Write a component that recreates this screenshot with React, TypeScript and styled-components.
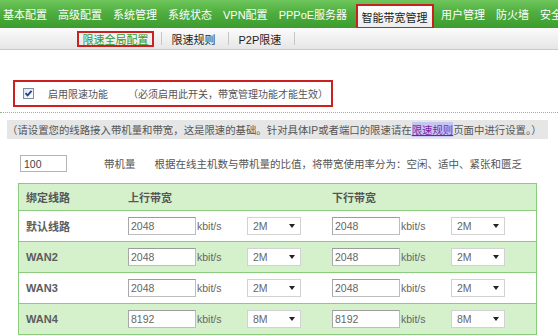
import React from "react";
import styled, { createGlobalStyle } from "styled-components";

const GlobalStyle = createGlobalStyle`
  html, body { margin: 0; padding: 0; background: #fff; }
  body {
    font-family: "Liberation Sans", "Noto Sans CJK SC", sans-serif;
    font-size: 10.5px;
    color: #555;
    overflow: hidden;
  }
  * { box-sizing: border-box; }
`;

const Page = styled.div`
  width: 558px;
  height: 335px;
  overflow: hidden;
  display: flex;
  flex-direction: column;
`;

const TopNav = styled.nav`
  display: flex;
  align-items: stretch;
  height: 28px;
  flex-shrink: 0;
  padding-left: 3px;
  background: linear-gradient(#6fc65c 0%, #4fae3f 45%, #3d9c2e 100%);
  white-space: nowrap;
  overflow: hidden;
  position: relative;
  z-index: 2;
`;

const NavItem = styled.span`
  display: flex;
  align-items: center;
  padding: 0 5.5px;
  font-size: 11px;
  color: #fff;
  &:first-child { padding-left: 0; }
`;

const NavSep = styled.span`
  width: 1px;
  margin: 7px 0 6px;
  background: rgba(255, 255, 255, 0.45);
`;

const NavActive = styled.span`
  display: flex;
  align-items: center;
  margin: 4px 2px -1px 3px;
  padding: 0 4px;
  border: 2px solid #c9211e;
  background: linear-gradient(#ffffff, #ececec);
  color: #222;
  font-size: 11px;
`;

const SubNav = styled.div`
  display: flex;
  align-items: center;
  height: 22px;
  flex-shrink: 0;
  padding-left: 77px;
  background: linear-gradient(#fbfbfb, #e6e6e6);
  border-bottom: 1px solid #c9c9c9;
  white-space: nowrap;
`;

const SubItem = styled.span<{ $active?: boolean }>`
  display: flex;
  align-items: center;
  height: 16px;
  padding: 0 3.5px;
  border: 2px solid ${(p) => (p.$active ? "#cc2121" : "transparent")};
  color: ${(p) => (p.$active ? "#2f9a1e" : "#222")};
  font-size: 11px;
`;

const SubSep = styled.span`
  width: 1px;
  height: 13px;
  margin: 0 4px 0 7px;
  background: #c6c6c6;
`;

const Content = styled.main`
  display: flex;
  flex-direction: column;
  align-items: flex-start;
`;

const SwitchBox = styled.div`
  display: flex;
  align-items: center;
  height: 27px;
  margin: 30px 0 0 13px;
  padding: 0 3px 0 8px;
  border: 2px solid #cc2020;
  font-size: 10px;
  color: #555;
  white-space: nowrap;
`;

const CheckBox = styled.span`
  display: flex;
  align-items: center;
  justify-content: center;
  width: 11px;
  height: 11px;
  margin-right: 14px;
  border: 1px solid #7a8ea6;
  background: linear-gradient(135deg, #dfe3ea, #ffffff);
`;

const SwitchLabel = styled.span`
  margin-right: 20px;
`;

const DottedRule = styled.div`
  align-self: stretch;
  margin-top: 5px;
  border-top: 1px dotted #86c278;
`;

const InfoBar = styled.div`
  display: flex;
  align-items: center;
  align-self: stretch;
  height: 19px;
  margin: 7px 10px 0 7px;
  background: #e6e6e6;
  font-size: 10.4px;
  color: #555;
  white-space: nowrap;
`;

const RuleLink = styled.a`
  color: #7b1fa2;
  background: #c6c6f2;
  text-decoration: underline;
`;

const CapacityRow = styled.div`
  display: flex;
  align-items: center;
  height: 17px;
  margin: 16px 0 0 20px;
  white-space: nowrap;
  color: #555;
`;

const CapInput = styled.input`
  width: 47px;
  height: 17px;
  padding: 0 3px;
  border: 1px solid #b4b4b4;
  font: 10.5px "Liberation Sans", sans-serif;
  color: #444;
  outline: none;
`;

const CapUnit = styled.span`
  margin-left: 37px;
  margin-right: 19px;
`;

const Table = styled.div`
  width: 519px;
  margin: 11px 0 0 18px;
  border: 1px solid #8bcb7e;
`;

const Row = styled.div<{ $green?: boolean; $head?: boolean }>`
  display: grid;
  grid-template-columns: 109px 204px 1fr;
  align-items: center;
  height: ${(p) => (p.$head ? "26px" : "31px")};
  border-top: ${(p) => (p.$head ? "none" : "1px solid #8bcb7e")};
  background: ${(p) => (p.$green ? "#d5f1cc" : "#ffffff")};
`;

const HeadCell = styled.span`
  font-size: 11px;
  font-weight: bold;
  color: #555;
  &:first-child { padding-left: 7px; }
`;

const LineName = styled.span`
  padding-left: 7px;
  font-size: 11px;
  font-weight: bold;
  color: #5c5c5c;
`;

const BwCell = styled.div`
  display: flex;
  align-items: center;
`;

const BwInput = styled.input`
  width: 68px;
  height: 18px;
  padding: 0 2px;
  border: 1px solid #bdbdbd;
  border-top-color: #9c9c9c;
  border-left-color: #a8a8a8;
  background: #fff;
  font: 10.5px "Liberation Sans", sans-serif;
  color: #666;
  outline: none;
`;

const Unit = styled.span`
  width: 51px;
  padding-left: 1px;
  font-size: 10.5px;
  color: #666;
`;

const SelectBox = styled.div`
  display: flex;
  align-items: center;
  justify-content: space-between;
  width: 54px;
  height: 18px;
  padding: 0 5px 0 5px;
  border: 1px solid #d2d2d2;
  background: #fff;
  font-size: 10.5px;
  color: #666;
`;

const Arrow = styled.span`
  width: 0;
  height: 0;
  border-left: 3.5px solid transparent;
  border-right: 3.5px solid transparent;
  border-top: 4px solid #222;
`;

type Line = { name: string; up: string; upSel: string; down: string; downSel: string };

const lines: Line[] = [
  { name: "默认线路", up: "2048", upSel: "2M", down: "2048", downSel: "2M" },
  { name: "WAN2", up: "2048", upSel: "2M", down: "2048", downSel: "2M" },
  { name: "WAN3", up: "2048", upSel: "2M", down: "2048", downSel: "2M" },
  { name: "WAN4", up: "8192", upSel: "8M", down: "8192", downSel: "8M" },
];

const Bandwidth = ({ value, sel }: { value: string; sel: string }) => (
  <BwCell>
    <BwInput readOnly value={value} />
    <Unit>kbit/s</Unit>
    <SelectBox>
      <span>{sel}</span>
      <Arrow />
    </SelectBox>
  </BwCell>
);

const navItems = ["基本配置", "高级配置", "系统管理", "系统状态", "VPN配置", "PPPoE服务器"];
const navAfter = ["用户管理", "防火墙", "安全"];

export default function App() {
  return (
    <>
      <GlobalStyle />
      <Page>
        <TopNav>
          {navItems.map((n, i) => (
            <React.Fragment key={n}>
              {i > 0 && <NavSep />}
              <NavItem>{n}</NavItem>
            </React.Fragment>
          ))}
          <NavSep />
          <NavActive>智能带宽管理</NavActive>
          {navAfter.map((n, i) => (
            <React.Fragment key={n}>
              {i > 0 && <NavSep />}
              <NavItem>{n}</NavItem>
            </React.Fragment>
          ))}
        </TopNav>
        <SubNav>
          <SubItem $active>限速全局配置</SubItem>
          <SubSep />
          <SubItem>限速规则</SubItem>
          <SubSep />
          <SubItem>P2P限速</SubItem>
          <SubSep />
        </SubNav>
        <Content>
          <SwitchBox>
            <CheckBox>
              <svg width="9" height="9" viewBox="0 0 9 9">
                <path d="M1.5 4.2 L3.6 6.4 L7.6 1.8" fill="none" stroke="#1f3f8f" strokeWidth="1.8" />
              </svg>
            </CheckBox>
            <SwitchLabel>启用限速功能</SwitchLabel>
            <span>（必须启用此开关，带宽管理功能才能生效）</span>
          </SwitchBox>
          <DottedRule />
          <InfoBar>
            <span>（请设置您的线路接入带机量和带宽，这是限速的基础。针对具体IP或者端口的限速请在</span>
            <RuleLink>限速规则</RuleLink>
            <span>页面中进行设置。）</span>
          </InfoBar>
          <CapacityRow>
            <CapInput readOnly value="100" />
            <CapUnit>带机量</CapUnit>
            <span>根据在线主机数与带机量的比值，将带宽使用率分为：空闲、适中、紧张和匮乏</span>
          </CapacityRow>
          <Table>
            <Row $head $green>
              <HeadCell>绑定线路</HeadCell>
              <HeadCell>上行带宽</HeadCell>
              <HeadCell>下行带宽</HeadCell>
            </Row>
            {lines.map((l, i) => (
              <Row key={l.name} $green={i % 2 === 1}>
                <LineName>{l.name}</LineName>
                <Bandwidth value={l.up} sel={l.upSel} />
                <Bandwidth value={l.down} sel={l.downSel} />
              </Row>
            ))}
          </Table>
        </Content>
      </Page>
    </>
  );
}
